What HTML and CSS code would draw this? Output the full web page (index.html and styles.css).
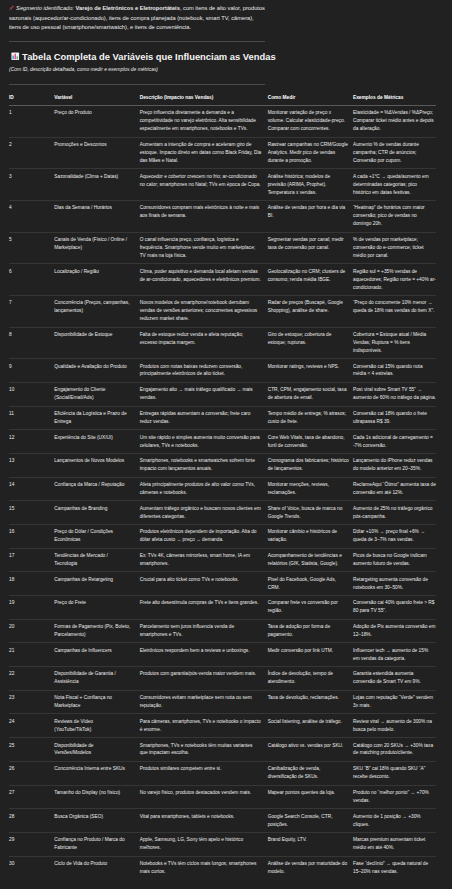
FILE: index.html
```html
<!DOCTYPE html>
<html lang="pt-BR">
<head>
<meta charset="utf-8">
<title>Tabela Completa de Variáveis que Influenciam as Vendas</title>
<link rel="stylesheet" href="styles.css">
</head>
<body>
<main class="page">
  <p class="intro"><svg class="pin" viewBox="0 0 10 10" aria-hidden="true"><path d="M6.2 0.8 L9.2 3.8 L8.2 4.3 L6.9 4.0 L5.3 5.6 L5.6 7.4 L4.9 8.1 L1.9 5.1 L2.6 4.4 L4.4 4.7 L6.0 3.1 L5.7 1.8 Z" fill="#e0354a"/><path d="M3.1 6.9 L0.8 9.2" stroke="#b8b8b8" stroke-width="0.8"/></svg> <em>Segmento identificado:</em> <strong>Varejo de Eletrônicos e Eletroportáteis</strong>, com itens de alto valor, produtos sazonais (aquecedor/ar-condicionado), itens de compra planejada (notebook, smart TV, câmera), itens de uso pessoal (smartphone/smartwatch), e itens de conveniência.</p>
  <hr class="rule">
  <h2 class="title"><svg class="chart" viewBox="0 0 10 10" aria-hidden="true"><rect x="0.5" y="0.5" width="9" height="9" rx="1" fill="#f2f2f2"/><rect x="1.8" y="4.2" width="1.6" height="4.3" fill="#3f8ee8"/><rect x="4.2" y="2" width="1.6" height="6.5" fill="#e0457a"/><rect x="6.6" y="5.2" width="1.6" height="3.3" fill="#4bb05a"/></svg> Tabela Completa de Variáveis que Influenciam as Vendas</h2>
  <p class="subtitle"><em>(Com ID, descrição detalhada, como medir e exemplos de métricas)</em></p>
  <hr class="rule rule-bottom">
  <table class="vars">
    <colgroup>
      <col class="c-id"><col class="c-var"><col class="c-desc"><col class="c-how"><col class="c-ex">
    </colgroup>
    <thead>
      <tr><th>ID</th><th>Variável</th><th>Descrição (Impacto nas Vendas)</th><th>Como Medir</th><th>Exemplos de Métricas</th></tr>
    </thead>
    <tbody>
      <tr><td>1</td><td>Preço do Produto</td><td>Preço influencia diretamente a demanda e a competitividade no varejo eletrônico. Alta sensibilidade especialmente em smartphones, notebooks e TVs.</td><td>Monitorar variação de preço x volume. Calcular elasticidade-preço. Comparar com concorrentes.</td><td>Elasticidade = %ΔVendas / %ΔPreço; Comparar ticket médio antes e depois da alteração.</td></tr>
      <tr><td>2</td><td>Promoções e Descontos</td><td>Aumentam a intenção de compra e aceleram giro de estoque. Impacto direto em datas como Black Friday, Dia das Mães e Natal.</td><td>Rastrear campanhas no CRM/Google Analytics. Medir pico de vendas durante a promoção.</td><td>Aumento % de vendas durante campanha; CTR de anúncios; Conversão por cupom.</td></tr>
      <tr><td>3</td><td>Sazonalidade (Clima + Datas)</td><td>Aquecedor e cobertor crescem no frio; ar-condicionado no calor; smartphones no Natal; TVs em época de Copa.</td><td>Análise histórica; modelos de previsão (ARIMA, Prophet). Temperatura x vendas.</td><td>A cada +1°C → queda/aumento em determinadas categorias; pico histórico em datas festivas.</td></tr>
      <tr><td>4</td><td>Dias da Semana / Horários</td><td>Consumidores compram mais eletrônicos à noite e mais aos finais de semana.</td><td>Análise de vendas por hora e dia via BI.</td><td>“Heatmap” de horários com maior conversão; pico de vendas no domingo 20h.</td></tr>
      <tr><td>5</td><td>Canais de Venda (Físico / Online / Marketplace)</td><td>O canal influencia preço, confiança, logística e frequência. Smartphone vende muito em marketplace; TV mais na loja física.</td><td>Segmentar vendas por canal; medir taxa de conversão por canal.</td><td>% de vendas por marketplace; conversão do e-commerce; ticket médio por canal.</td></tr>
      <tr><td>6</td><td>Localização / Região</td><td>Clima, poder aquisitivo e demanda local afetam vendas de ar-condicionado, aquecedores e eletrônicos premium.</td><td>Geolocalização no CRM; clusters de consumo; renda média IBGE.</td><td>Região sul = +35% vendas de aquecedores; Região norte = +40% ar-condicionado.</td></tr>
      <tr><td>7</td><td>Concorrência (Preços, campanhas, lançamentos)</td><td>Novos modelos de smartphone/notebook derrubam vendas de versões anteriores; concorrentes agressivos reduzem market share.</td><td>Radar de preços (Buscapé, Google Shopping), análise de share.</td><td>“Preço do concorrente 10% menor → queda de 18% nas vendas do item X”.</td></tr>
      <tr><td>8</td><td>Disponibilidade de Estoque</td><td>Falta de estoque reduz venda e afeta reputação; excesso impacta margem.</td><td>Giro de estoque; cobertura de estoque; rupturas.</td><td>Cobertura = Estoque atual / Média Vendas; Ruptura = % itens indisponíveis.</td></tr>
      <tr><td>9</td><td>Qualidade e Avaliação do Produto</td><td>Produtos com notas baixas reduzem conversão, principalmente eletrônicos de alto ticket.</td><td>Monitorar ratings, reviews e NPS.</td><td>Conversão cai 15% quando nota média &lt; 4 estrelas.</td></tr>
      <tr><td>10</td><td>Engajamento do Cliente (Social/Email/Ads)</td><td>Engajamento alto → mais tráfego qualificado → mais vendas.</td><td>CTR, CPM, engajamento social, taxa de abertura de email.</td><td>Post viral sobre Smart TV 55” → aumento de 60% no tráfego da página.</td></tr>
      <tr><td>11</td><td>Eficiência da Logística e Prazo de Entrega</td><td>Entregas rápidas aumentam a conversão; frete caro reduz vendas.</td><td>Tempo médio de entrega; % atrasos; custo de frete.</td><td>Conversão cai 18% quando o frete ultrapassa R$ 39.</td></tr>
      <tr><td>12</td><td>Experiência do Site (UX/UI)</td><td>Um site rápido e simples aumenta muito conversão para celulares, TVs e notebooks.</td><td>Core Web Vitals, taxa de abandono, funil de conversão.</td><td>Cada 1s adicional de carregamento = -7% conversão.</td></tr>
      <tr><td>13</td><td>Lançamentos de Novos Modelos</td><td>Smartphones, notebooks e smartwatches sofrem forte impacto com lançamentos anuais.</td><td>Cronograma dos fabricantes; histórico de lançamentos.</td><td>Lançamento do iPhone reduz vendas do modelo anterior em 20–35%.</td></tr>
      <tr><td>14</td><td>Confiança da Marca / Reputação</td><td>Afeta principalmente produtos de alto valor como TVs, câmeras e notebooks.</td><td>Monitorar menções, reviews, reclamações.</td><td>ReclameAqui “Ótimo” aumenta taxa de conversão em até 12%.</td></tr>
      <tr><td>15</td><td>Campanhas de Branding</td><td>Aumentam tráfego orgânico e buscam novos clientes em diferentes categorias.</td><td>Share of Voice, busca de marca no Google Trends.</td><td>Aumento de 25% no tráfego orgânico pós-campanha.</td></tr>
      <tr><td>16</td><td>Preço do Dólar / Condições Econômicas</td><td>Produtos eletrônicos dependem de importação. Alta do dólar afeta custo → preço → demanda.</td><td>Monitorar câmbio e históricos de variação.</td><td>Dólar +10% → preço final +6% → queda de 3–7% nas vendas.</td></tr>
      <tr><td>17</td><td>Tendências de Mercado / Tecnologia</td><td>Ex: TVs 4K, câmeras mirrorless, smart home, IA em smartphones.</td><td>Acompanhamento de tendências e relatórios (GfK, Statista, Google).</td><td>Picos de busca no Google indicam aumento futuro de vendas.</td></tr>
      <tr><td>18</td><td>Campanhas de Retargeting</td><td>Crucial para alto ticket como TVs e notebooks.</td><td>Pixel do Facebook, Google Ads, CRM.</td><td>Retargeting aumenta conversão de notebooks em 30–50%.</td></tr>
      <tr><td>19</td><td>Preço do Frete</td><td>Frete alto desestimula compras de TVs e itens grandes.</td><td>Comparar frete vs conversão por região.</td><td>Conversão cai 40% quando frete &gt; R$ 80 para TV 55”.</td></tr>
      <tr><td>20</td><td>Formas de Pagamento (Pix, Boleto, Parcelamento)</td><td>Parcelamento sem juros influencia venda de smartphones e TVs.</td><td>Taxa de adoção por forma de pagamento.</td><td>Adoção de Pix aumenta conversão em 12–18%.</td></tr>
      <tr><td>21</td><td>Campanhas de Influencers</td><td>Eletrônicos respondem bem a reviews e unboxings.</td><td>Medir conversão por link UTM.</td><td>Influencer tech → aumento de 15% em vendas da categoria.</td></tr>
      <tr><td>22</td><td>Disponibilidade de Garantia / Assistência</td><td>Produtos com garantia/pós-venda maior vendem mais.</td><td>Índice de devolução, tempo de atendimento.</td><td>Garantia estendida aumenta conversão de Smart TV em 9%.</td></tr>
      <tr><td>23</td><td>Nota Fiscal + Confiança no Marketplace</td><td>Consumidores evitam marketplace sem nota ou sem reputação.</td><td>Taxa de devolução, reclamações.</td><td>Lojas com reputação “Verde” vendem 3x mais.</td></tr>
      <tr><td>24</td><td>Reviews de Vídeo (YouTube/TikTok)</td><td>Para câmeras, smartphones, TVs e notebooks o impacto é enorme.</td><td>Social listening, análise de tráfego.</td><td>Review viral → aumento de 300% na busca pelo modelo.</td></tr>
      <tr><td>25</td><td>Disponibilidade de Versões/Modelos</td><td>Smartphones, TVs e notebooks têm muitas variantes que impactam escolha.</td><td>Catálogo ativo vs. vendas por SKU.</td><td>Catálogo com 20 SKUs → +30% taxa de matching produto/cliente.</td></tr>
      <tr><td>26</td><td>Concorrência Interna entre SKUs</td><td>Produtos similares competem entre si.</td><td>Canibalização de venda, diversificação de SKUs.</td><td>SKU “B” cai 18% quando SKU “A” recebe desconto.</td></tr>
      <tr><td>27</td><td>Tamanho do Display (no físico)</td><td>No varejo físico, produtos destacados vendem mais.</td><td>Mapear pontos quentes da loja.</td><td>Produto no “melhor ponto” → +70% vendas.</td></tr>
      <tr><td>28</td><td>Busca Orgânica (SEO)</td><td>Vital para smartphones, tablets e notebooks.</td><td>Google Search Console, CTR, posições.</td><td>Aumento de 1 posição → +30% cliques.</td></tr>
      <tr><td>29</td><td>Confiança no Produto / Marca do Fabricante</td><td>Apple, Samsung, LG, Sony têm apelo e histórico melhores.</td><td>Brand Equity, LTV.</td><td>Marcas premium aumentam ticket médio em até 40%.</td></tr>
      <tr><td>30</td><td>Ciclo de Vida do Produto</td><td>Notebooks e TVs têm ciclos mais longos; smartphones mais curtos.</td><td>Análise de vendas por maturidade do modelo.</td><td>Fase “declínio” → queda natural de 15–20% nas vendas.</td></tr>
    </tbody>
  </table>
</main>
</body>
</html>
```
FILE: styles.css
```css
html, body {
  margin: 0;
  padding: 0;
  background: #212121;
}
body {
  color: #ececec;
  font-family: "Liberation Sans", Arial, sans-serif;
}
.page {
  padding: 4px 0 0 9px;
}
.intro {
  margin: 0;
  width: 256px;
  font-size: 5.7px;
  line-height: 9.6px;
}
.intro strong { font-weight: 700; }
.pin {
  width: 5.5px;
  height: 5.5px;
  vertical-align: -0.5px;
}
.rule {
  width: 256px;
  margin: 8px 0 0 0;
  border: 0;
  border-top: 1px solid #4a4a4a;
  height: 0;
}
.title {
  margin: 9.5px 0 0 0;
  font-size: 9.4px;
  line-height: 12px;
  font-weight: 600;
  color: #f4f4f4;
}
.chart {
  width: 8.5px;
  height: 8.5px;
  vertical-align: -0.5px;
  margin-left: 2px;
}
.subtitle {
  margin: 3px 0 0 0;
  font-size: 4.95px;
  line-height: 8px;
}
.rule-bottom {
  margin-top: 10px;
}
.vars {
  margin-top: 5px;
  width: 427px;
  table-layout: fixed;
  border-collapse: collapse;
  font-size: 4.8px;
  line-height: 7.95px;
}
.c-id { width: 45.3px; }
.c-var { width: 85.4px; }
.c-desc { width: 128px; }
.c-how { width: 85.3px; }
.c-ex { width: 83px; }
.vars th, .vars td {
  text-align: left;
  vertical-align: top;
  padding: 3.4px 4px 3.4px 0;
}
.vars td:nth-child(2) {
  padding-right: 9px;
}
.vars td:nth-child(3) {
  padding-right: 6px;
}
.vars th:last-child, .vars td:last-child {
  padding-right: 0;
}
.vars th {
  font-weight: 600;
  color: #ffffff;
  border-bottom: 1px solid #5a5a5a;
}
.vars td {
  border-bottom: 1px solid #363636;
}
.vars tbody tr:last-child td {
  border-bottom: 0;
}
```
